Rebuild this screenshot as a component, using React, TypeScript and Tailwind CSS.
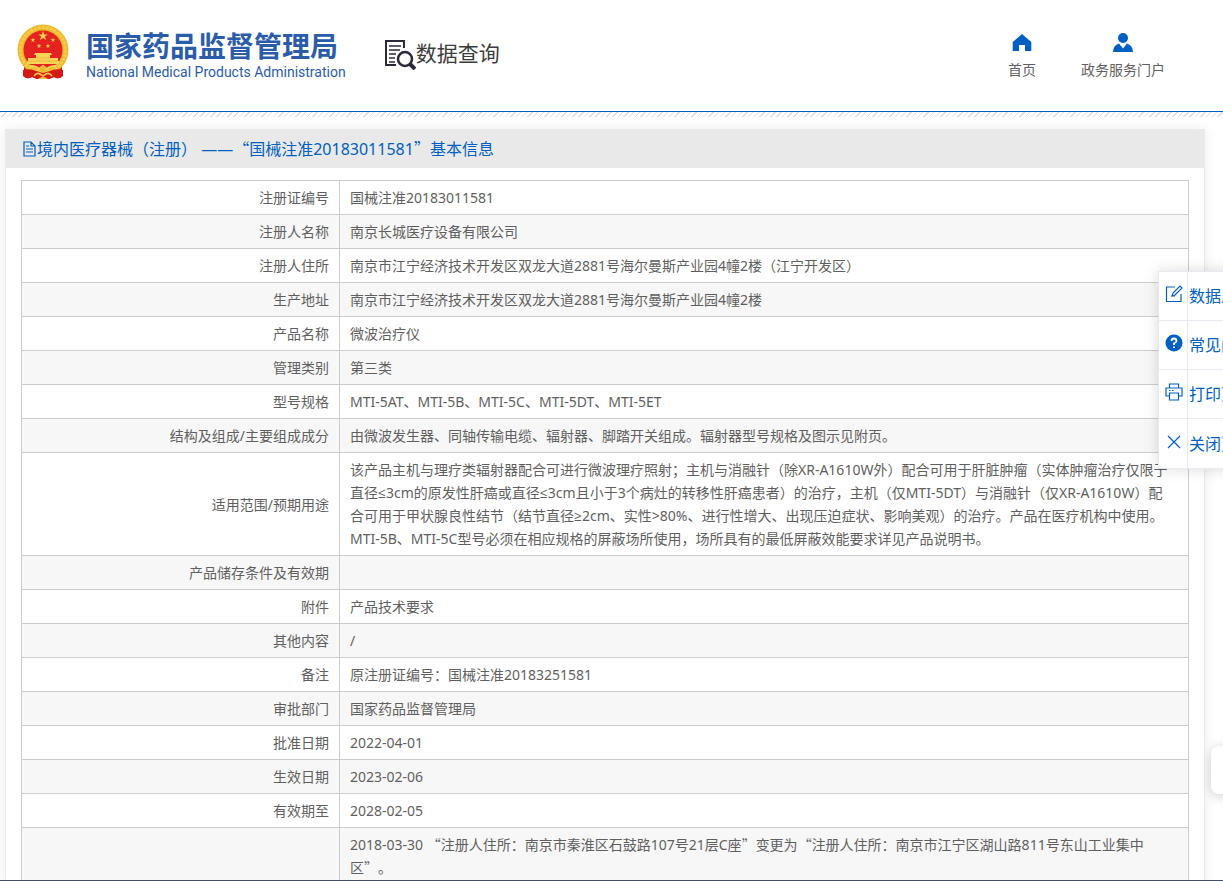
import { ReactNode } from 'react';

const rows: [string, string][] = [
  ['注册证编号', '国械注准20183011581'],
  ['注册人名称', '南京长城医疗设备有限公司'],
  ['注册人住所', '南京市江宁经济技术开发区双龙大道2881号海尔曼斯产业园4幢2楼（江宁开发区）'],
  ['生产地址', '南京市江宁经济技术开发区双龙大道2881号海尔曼斯产业园4幢2楼'],
  ['产品名称', '微波治疗仪'],
  ['管理类别', '第三类'],
  ['型号规格', 'MTI-5AT、MTI-5B、MTI-5C、MTI-5DT、MTI-5ET'],
  ['结构及组成/主要组成成分', '由微波发生器、同轴传输电缆、辐射器、脚踏开关组成。辐射器型号规格及图示见附页。'],
  [
    '适用范围/预期用途',
    '该产品主机与理疗类辐射器配合可进行微波理疗照射；主机与消融针（除XR-A1610W外）配合可用于肝脏肿瘤（实体肿瘤治疗仅限于直径≤3cm的原发性肝癌或直径≤3cm且小于3个病灶的转移性肝癌患者）的治疗，主机（仅MTI-5DT）与消融针（仅XR-A1610W）配合可用于甲状腺良性结节（结节直径≥2cm、实性>80%、进行性增大、出现压迫症状、影响美观）的治疗。产品在医疗机构中使用。MTI-5B、MTI-5C型号必须在相应规格的屏蔽场所使用，场所具有的最低屏蔽效能要求详见产品说明书。',
  ],
  ['产品储存条件及有效期', ''],
  ['附件', '产品技术要求'],
  ['其他内容', '/'],
  ['备注', '原注册证编号：国械注准20183251581'],
  ['审批部门', '国家药品监督管理局'],
  ['批准日期', '2022-04-01'],
  ['生效日期', '2023-02-06'],
  ['有效期至', '2028-02-05'],
  ['', '2018-03-30 “注册人住所：南京市秦淮区石鼓路107号21层C座”变更为“注册人住所：南京市江宁区湖山路811号东山工业集中区”。'],
];

// Curly quotes are set full width, so they come from the CJK face
function Text({ children }: { children: string }) {
  return (
    <>
      {children.split(/([“”])/).map((part, i) =>
        i % 2 ? <span key={i} className="font-['Noto_Sans_CJK_SC',sans-serif]">{part}</span> : part
      )}
    </>
  );
}

function Star({ x, y, r }: { x: number; y: number; r: number }) {
  const points = Array.from({ length: 10 }, (_, i) => {
    const a = (Math.PI * i) / 5 - Math.PI / 2;
    const d = i % 2 ? r * 0.4 : r;
    return `${x + d * Math.cos(a)},${y + d * Math.sin(a)}`;
  }).join(' ');
  return <polygon points={points} fill="#f9d34a" />;
}

function Emblem() {
  return (
    <svg viewBox="0 0 52 56" className="w-[52px] h-14 shrink-0" aria-hidden="true">
      <path d="M7 38L7 52Q10 56 15 53L20 55H32L37 53Q42 56 45 52V38Z" fill="#cf1715" />
      <circle cx="26" cy="26" r="25.5" fill="#edb92c" />
      <circle cx="26" cy="26" r="22.5" fill="none" stroke="#f4cb4a" strokeWidth="3" strokeDasharray="3 1" />
      <circle cx="26" cy="26" r="19.5" fill="#e42320" />
      <Star x={26} y={12} r={5} />
      <Star x={16} y={16} r={2.5} />
      <Star x={36} y={16} r={2.5} />
      <Star x={22} y={22} r={2.5} />
      <Star x={31} y={22} r={2.5} />
      <path d="M18 29h16l1 2h-2v3h8v3h1v3H10v-3h1v-3h8v-3h-2z" fill="#f8d357" />
      <path d="M19 34h14M11 37h30" stroke="#e8a62c" strokeWidth="0.6" />
      <path d="M6 46q8-2 13 1l7 2 7-2q5-3 13-1v6q-4 4-9 1l-5 2H20l-5-2q-5 3-9-1z" fill="#d31a16" />
      <path d="M13 42q6 0 9 3l4-3 4 3q3-3 9-3" fill="none" stroke="#f8d357" strokeWidth="2" />
      <circle cx="26" cy="45" r="3" fill="#edb92c" />
      <path d="M17 52q3-4 6-2l3 2 3-2q3-2 6 2" fill="none" stroke="#f3c640" strokeWidth="1.6" />
      <path d="M21 55q5-4 10 0z" fill="#f3c640" />
    </svg>
  );
}

function SearchDoc() {
  return (
    <svg viewBox="0 0 32 32" className="size-8" fill="none" stroke="#2b2a3c" strokeWidth="2" aria-hidden="true">
      <path d="M20 10V3H2v24h10" />
      <path d="M5 8h12M5 12h11M5 16h7M5 20h6M5 24h6" strokeWidth="1.5" />
      <circle cx="21" cy="21" r="7" strokeWidth="2.5" />
      <path d="M26 26l5 5" strokeWidth="4" />
    </svg>
  );
}

function NavLink({ label, children }: { label: string; children: ReactNode }) {
  return (
    <a href="#" className="flex flex-col items-center gap-2 text-sm leading-5 text-[#5f5f5f]">
      <svg viewBox="0 0 20 20" className="size-5" fill="#005fc2" aria-hidden="true">{children}</svg>
      {label}
    </a>
  );
}

function SideButton({ label, children }: { label: string; children: ReactNode }) {
  return (
    <button className="flex h-[49px] w-full items-center border-b border-[#e8eaf2] text-[#005fc2] last:border-b-0">
      <span className="flex h-full w-[29px] shrink-0 items-center justify-center border-r border-[#e8eaf2] pb-1 pl-px">
        <svg viewBox="0 0 18 18" className="size-[18px]" fill="none" stroke="currentColor" strokeWidth="1.2" aria-hidden="true">
          {children}
        </svg>
      </span>
      <span className="pl-px whitespace-nowrap text-base">{label}</span>
    </button>
  );
}

export default function App() {
  return (
    <div
      lang="zh-CN"
      className="relative h-screen overflow-hidden border-b border-[#415062] bg-white font-['Noto_Sans','Open_Sans','Noto_Sans_CJK_SC',sans-serif] text-[#5f5f5f] [text-spacing-trim:space-all]"
    >
      <header className="flex h-28 items-center border-b border-[#005fc2] pr-[58px] pb-1 pl-[17px]">
        <a href="#" className="flex items-center gap-[17px] pb-1 text-[#2a5caa]">
          <Emblem />
          <span className="flex flex-col pt-1">
            <span className="font-['Noto_Sans_CJK_SC',sans-serif] text-[28px] leading-9 font-bold">国家药品监督管理局</span>
            <span className="font-['Roboto',sans-serif] text-sm leading-[18px]">National Medical Products Administration</span>
          </span>
        </a>
        <h1 className="ml-[38px] flex items-center text-[21px] text-[#3c3c3c]">
          <SearchDoc />
          数据查询
        </h1>
        <nav className="ml-auto flex gap-[45px] pt-1">
          <NavLink label="首页">
            <path d="M10 2L.7 10v9H7v-6h6v6h6.300v-9z" />
          </NavLink>
          <NavLink label="政务服务门户">
            <circle cx="10" cy="6" r="5" />
            <path d="M0 20.500q0-7 6-9l4 5 4-5q6 2 6 9z" />
          </NavLink>
        </nav>
      </header>
      <div className="h-[5px] bg-[repeating-linear-gradient(135deg,#dedede_0_1px,#fff_1px_4px)]" />

      <main className="mt-3 mr-[18px] ml-[5px] border border-[#ebebeb] bg-white shadow-[0_0_12px_rgba(0,0,0,0.08)]">
        <h2 className="flex h-[38px] items-center bg-[#e9e9e9] px-4 pb-px text-base text-[#005fc2]">
          <svg viewBox="0 0 15 16" className="h-4 w-[15px]" fill="none" stroke="currentColor" strokeWidth="1.2" aria-hidden="true">
            <path d="M9 1H2v14h11V5zM9 1v4h4M4 8h7M4 11h7M4 5h3" />
          </svg>
          <span className="whitespace-pre"><Text>境内医疗器械（注册） ——“国械注准20183011581”基本信息</Text></span>
        </h2>
        <div className="px-[15px] pt-3">
          <table className="w-full table-fixed border-collapse border border-[#ccc] text-sm leading-[23px]">
            <colgroup>
              <col className="w-[318px]" />
              <col />
            </colgroup>
            <tbody>
              {rows.map(([label, value], i) => (
                <tr key={i} className="h-[34px] even:bg-[#f7f7f7]">
                  <th scope="row" className="border border-[#ccc] px-[10px] py-[5px] text-right font-normal">{label}</th>
                  <td className="border border-[#ccc] py-[5px] pr-4 pl-[10px]"><Text>{value}</Text></td>
                </tr>
              ))}
            </tbody>
          </table>
        </div>
      </main>

      <aside className="absolute top-[271px] -right-[35px] w-[100px] border border-[#e8eaf2] bg-white shadow-[0_0_14px_rgba(0,0,0,0.15)]">
        <SideButton label="数据总览">
          <path d="M10 2H1.500v14.500h14.500V9M7 11l1-3 7-7 2 2-7 7zM7 11h3" />
        </SideButton>
        <SideButton label="常见问题">
          <circle cx="9" cy="9" r="8.500" fill="currentColor" stroke="none" />
          <path d="M6.500 7q0-2.500 2.500-2.500T11.500 7Q11.500 8 9 9.500V11M9 12.500v1.500" stroke="#fff" strokeWidth="1.800" />
        </SideButton>
        <SideButton label="打印页面">
          <path d="M4.500 5V1h9v4M4.500 13H1V5h16v8h-3.500M4.500 10h9v7h-9zM4 7.500h1.500M7 7.500h1.500" />
        </SideButton>
        <SideButton label="关闭页面">
          <path d="M3 3l12 12M15 3L3 15" />
        </SideButton>
      </aside>
      <div className="absolute top-[746px] -right-9 size-12 rounded-lg bg-white shadow-[0_2px_12px_rgba(0,0,0,0.2)]" />
    </div>
  );
}
